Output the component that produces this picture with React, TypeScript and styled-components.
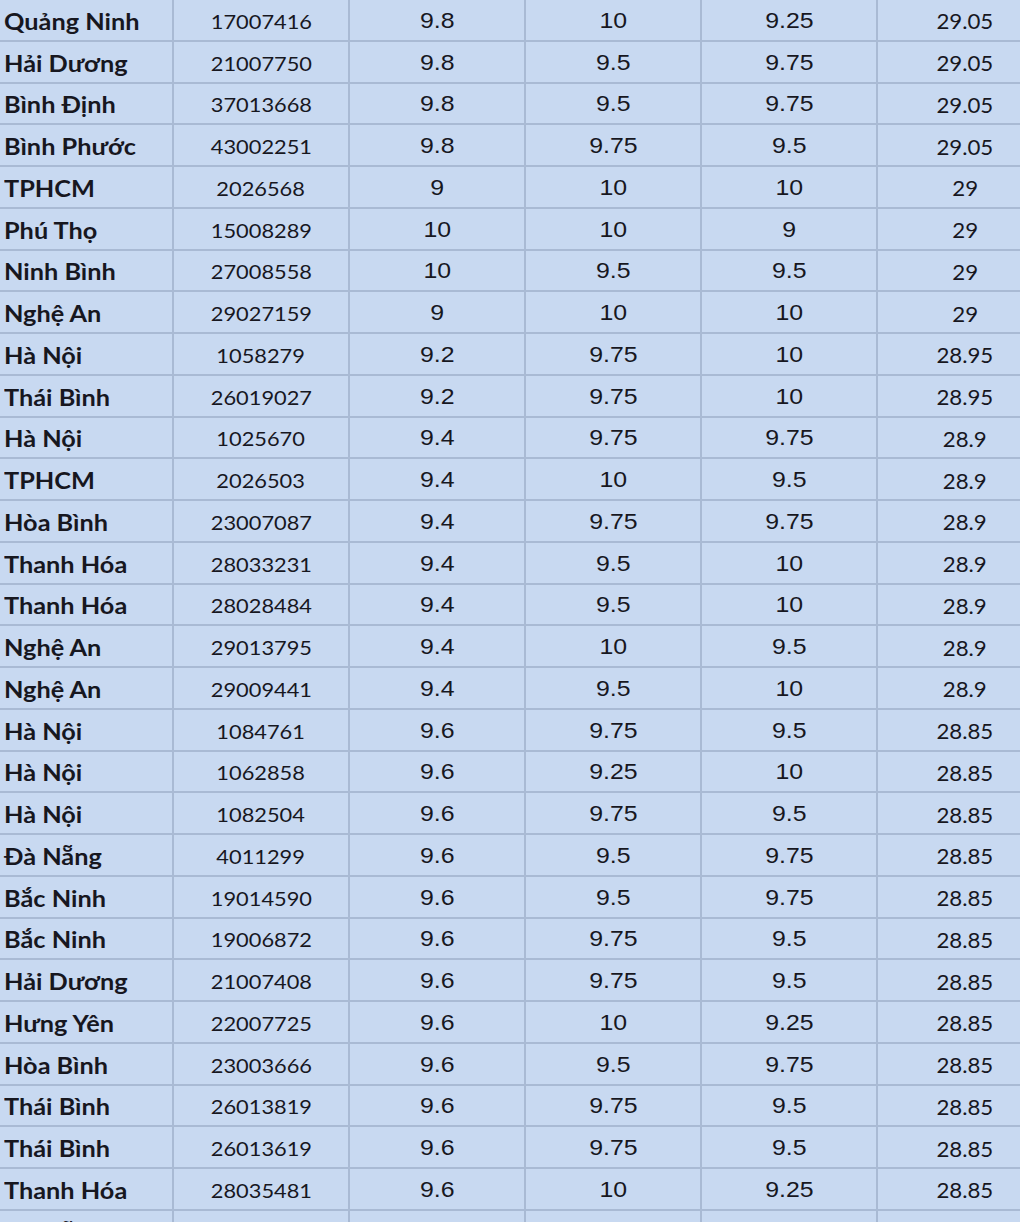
import React from 'react';
import styled, { createGlobalStyle } from 'styled-components';

const GlobalStyle = createGlobalStyle`
  html, body {
    margin: 0;
    padding: 0;
    background: #c8d9f1;
    overflow: hidden;
  }
`;

const Sheet = styled.div`
  width: 1060px;
  background: #c8d9f1;
  color: #17171f;
`;

const Row = styled.div`
  display: grid;
  grid-template-columns: 174px 176px 176px 176px 176px 176px;
  height: 41.75px;
  box-sizing: border-box;
  border-bottom: 2px solid #a9bad4;
`;

const Cell = styled.div<{ $align?: 'left' | 'center' }>`
  display: flex;
  align-items: center;
  justify-content: ${(p) => (p.$align === 'left' ? 'flex-start' : 'center')};
  padding-left: ${(p) => (p.$align === 'left' ? '4px' : '0')};
  padding-top: 2px;
  box-sizing: border-box;
  border-right: 2px solid #a9bad4;
  overflow: hidden;
  white-space: nowrap;
`;

const Province = styled.span`
  display: inline-block;
  font-family: Lato, 'Open Sans', sans-serif;
  font-weight: 700;
  font-size: 23px;
  transform: scaleX(1.1);
  transform-origin: left center;
`;

const Code = styled.span`
  display: inline-block;
  font-family: Lato, 'Open Sans', sans-serif;
  font-size: 20px;
  transform: scaleX(1.09);
`;

const Score = styled.span`
  display: inline-block;
  font-family: 'Liberation Sans', Arial, sans-serif;
  font-size: 22px;
  transform: scaleX(1.13);
`;

const Total = styled.span`
  display: inline-block;
  font-family: Lato, 'Open Sans', sans-serif;
  font-size: 21px;
  transform: scaleX(1.06);
`;

type Entry = [string, string, string, string, string, string];

const rows: Entry[] = [
  ['Quảng Ninh', '17007416', '9.8', '10', '9.25', '29.05'],
  ['Hải Dương', '21007750', '9.8', '9.5', '9.75', '29.05'],
  ['Bình Định', '37013668', '9.8', '9.5', '9.75', '29.05'],
  ['Bình Phước', '43002251', '9.8', '9.75', '9.5', '29.05'],
  ['TPHCM', '2026568', '9', '10', '10', '29'],
  ['Phú Thọ', '15008289', '10', '10', '9', '29'],
  ['Ninh Bình', '27008558', '10', '9.5', '9.5', '29'],
  ['Nghệ An', '29027159', '9', '10', '10', '29'],
  ['Hà Nội', '1058279', '9.2', '9.75', '10', '28.95'],
  ['Thái Bình', '26019027', '9.2', '9.75', '10', '28.95'],
  ['Hà Nội', '1025670', '9.4', '9.75', '9.75', '28.9'],
  ['TPHCM', '2026503', '9.4', '10', '9.5', '28.9'],
  ['Hòa Bình', '23007087', '9.4', '9.75', '9.75', '28.9'],
  ['Thanh Hóa', '28033231', '9.4', '9.5', '10', '28.9'],
  ['Thanh Hóa', '28028484', '9.4', '9.5', '10', '28.9'],
  ['Nghệ An', '29013795', '9.4', '10', '9.5', '28.9'],
  ['Nghệ An', '29009441', '9.4', '9.5', '10', '28.9'],
  ['Hà Nội', '1084761', '9.6', '9.75', '9.5', '28.85'],
  ['Hà Nội', '1062858', '9.6', '9.25', '10', '28.85'],
  ['Hà Nội', '1082504', '9.6', '9.75', '9.5', '28.85'],
  ['Đà Nẵng', '4011299', '9.6', '9.5', '9.75', '28.85'],
  ['Bắc Ninh', '19014590', '9.6', '9.5', '9.75', '28.85'],
  ['Bắc Ninh', '19006872', '9.6', '9.75', '9.5', '28.85'],
  ['Hải Dương', '21007408', '9.6', '9.75', '9.5', '28.85'],
  ['Hưng Yên', '22007725', '9.6', '10', '9.25', '28.85'],
  ['Hòa Bình', '23003666', '9.6', '9.5', '9.75', '28.85'],
  ['Thái Bình', '26013819', '9.6', '9.75', '9.5', '28.85'],
  ['Thái Bình', '26013619', '9.6', '9.75', '9.5', '28.85'],
  ['Thanh Hóa', '28035481', '9.6', '10', '9.25', '28.85'],
  ['Đà Nẵng', '4011362', '9.6', '9.5', '9.75', '28.85'],
];

export default function App() {
  return (
    <>
      <GlobalStyle />
      <Sheet>
        {rows.map(([province, code, a, b, c, total], i) => (
          <Row key={i}>
            <Cell $align="left">
              <Province>{province}</Province>
            </Cell>
            <Cell>
              <Code>{code}</Code>
            </Cell>
            <Cell>
              <Score>{a}</Score>
            </Cell>
            <Cell>
              <Score>{b}</Score>
            </Cell>
            <Cell>
              <Score>{c}</Score>
            </Cell>
            <Cell>
              <Total>{total}</Total>
            </Cell>
          </Row>
        ))}
      </Sheet>
    </>
  );
}
